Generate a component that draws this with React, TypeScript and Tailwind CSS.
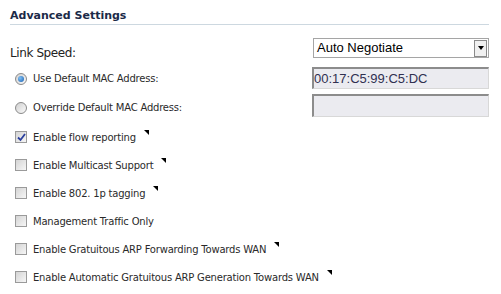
import React from "react";

const Tri = () => (
  <span className="inline-block ml-[8px] -mt-[9px] w-0 h-0 border-t-[5px] border-t-black border-l-[5px] border-l-transparent align-top" />
);

const Check = ({ checked }: { checked?: boolean }) => (
  <span className="inline-flex items-center justify-center w-[12px] h-[12px] border border-[#9a9a9a] bg-gradient-to-br from-[#d4d4d4] to-[#f6f6f6] shrink-0">
    {checked && (
      <svg width="9" height="9" viewBox="0 0 9 9">
        <path d="M1 4.5 L3.5 7 L8 1" stroke="#2a3f9e" strokeWidth="1.8" fill="none" />
      </svg>
    )}
  </span>
);

const Radio = ({ checked }: { checked?: boolean }) => (
  <span className="inline-flex items-center justify-center w-[12px] h-[12px] rounded-full border border-[#8a8a8a] bg-gradient-to-br from-[#d0d0d0] to-[#fafafa] shrink-0">
    {checked && <span className="w-[6px] h-[6px] rounded-full bg-[radial-gradient(circle_at_35%_35%,#7fc0f5,#1a5fb0)]" />}
  </span>
);

const CheckRow = ({ label, checked, tri }: { label: string; checked?: boolean; tri?: boolean }) => (
  <div className="h-[28px] flex items-center pl-[5px]">
    <Check checked={checked} />
    <span className="ml-[6px] text-[10px] tracking-[-0.2px] text-[#2a2a2a]">{label}</span>
    {tri && <Tri />}
  </div>
);

export default function App() {
  return (
    <div className="w-[501px] h-[294px] bg-white pl-[10px] pr-[12px] pt-[9px] font-['DejaVu_Sans',sans-serif] overflow-hidden">
      <div className="border-b border-[#cdd8e0] pb-[1px] text-[11px] font-bold text-[#1b2a48] leading-[14px]">
        Advanced Settings
      </div>
      <div className="flex items-end mt-[13px] h-[20px]">
        <span className="flex-1 text-[12px] tracking-[-0.4px] text-[#222] leading-[14px] -mb-[2px]">Link Speed:</span>
        <div className="w-[176px] h-[20px] border border-[#a5a5a5] flex items-center font-['Liberation_Sans',sans-serif] text-[13px] text-black">
          <span className="flex-1 pl-[3px]">Auto Negotiate</span>
          <span className="w-[13px] h-[17px] mr-[1px] border border-[#8a8a8a] bg-[#f0f0f0] flex items-center justify-center">
            <span className="w-0 h-0 border-t-[4px] border-t-black border-l-[3.5px] border-l-transparent border-r-[3.5px] border-r-transparent" />
          </span>
        </div>
      </div>
      <div className="flex items-center mt-[9px] h-[22px]">
        <div className="flex-1 flex items-center pl-[5px] pt-[1px]">
          <Radio checked />
          <span className="ml-[6px] text-[10px] tracking-[-0.2px] text-[#2a2a2a]">Use Default MAC Address:</span>
        </div>
        <div className="w-[177px] h-[22px] bg-[#ebebf0] border-t-2 border-l-2 border-[#8c8c8c] border-r border-b border-r-[#d8d8d8] border-b-[#d8d8d8] flex items-center font-['Liberation_Sans',sans-serif] text-[13px] text-[#303050]">
          00:17:C5:99:C5:DC
        </div>
      </div>
      <div className="flex items-center mt-[5px] h-[23px]">
        <div className="flex-1 flex items-center pl-[5px] pt-[4px]">
          <Radio />
          <span className="ml-[6px] text-[10px] tracking-[-0.2px] text-[#2a2a2a]">Override Default MAC Address:</span>
        </div>
        <div className="w-[177px] h-[23px] bg-[#ebebf0] border-t-2 border-l-2 border-[#8c8c8c] border-r border-b border-r-[#d8d8d8] border-b-[#d8d8d8]" />
      </div>
      <div className="mt-[6px]">
        <CheckRow label="Enable flow reporting" checked tri />
        <CheckRow label="Enable Multicast Support" tri />
        <CheckRow label="Enable 802. 1p tagging" tri />
        <CheckRow label="Management Traffic Only" />
        <CheckRow label="Enable Gratuitous ARP Forwarding Towards WAN" tri />
        <CheckRow label="Enable Automatic Gratuitous ARP Generation Towards WAN" tri />
      </div>
    </div>
  );
}
